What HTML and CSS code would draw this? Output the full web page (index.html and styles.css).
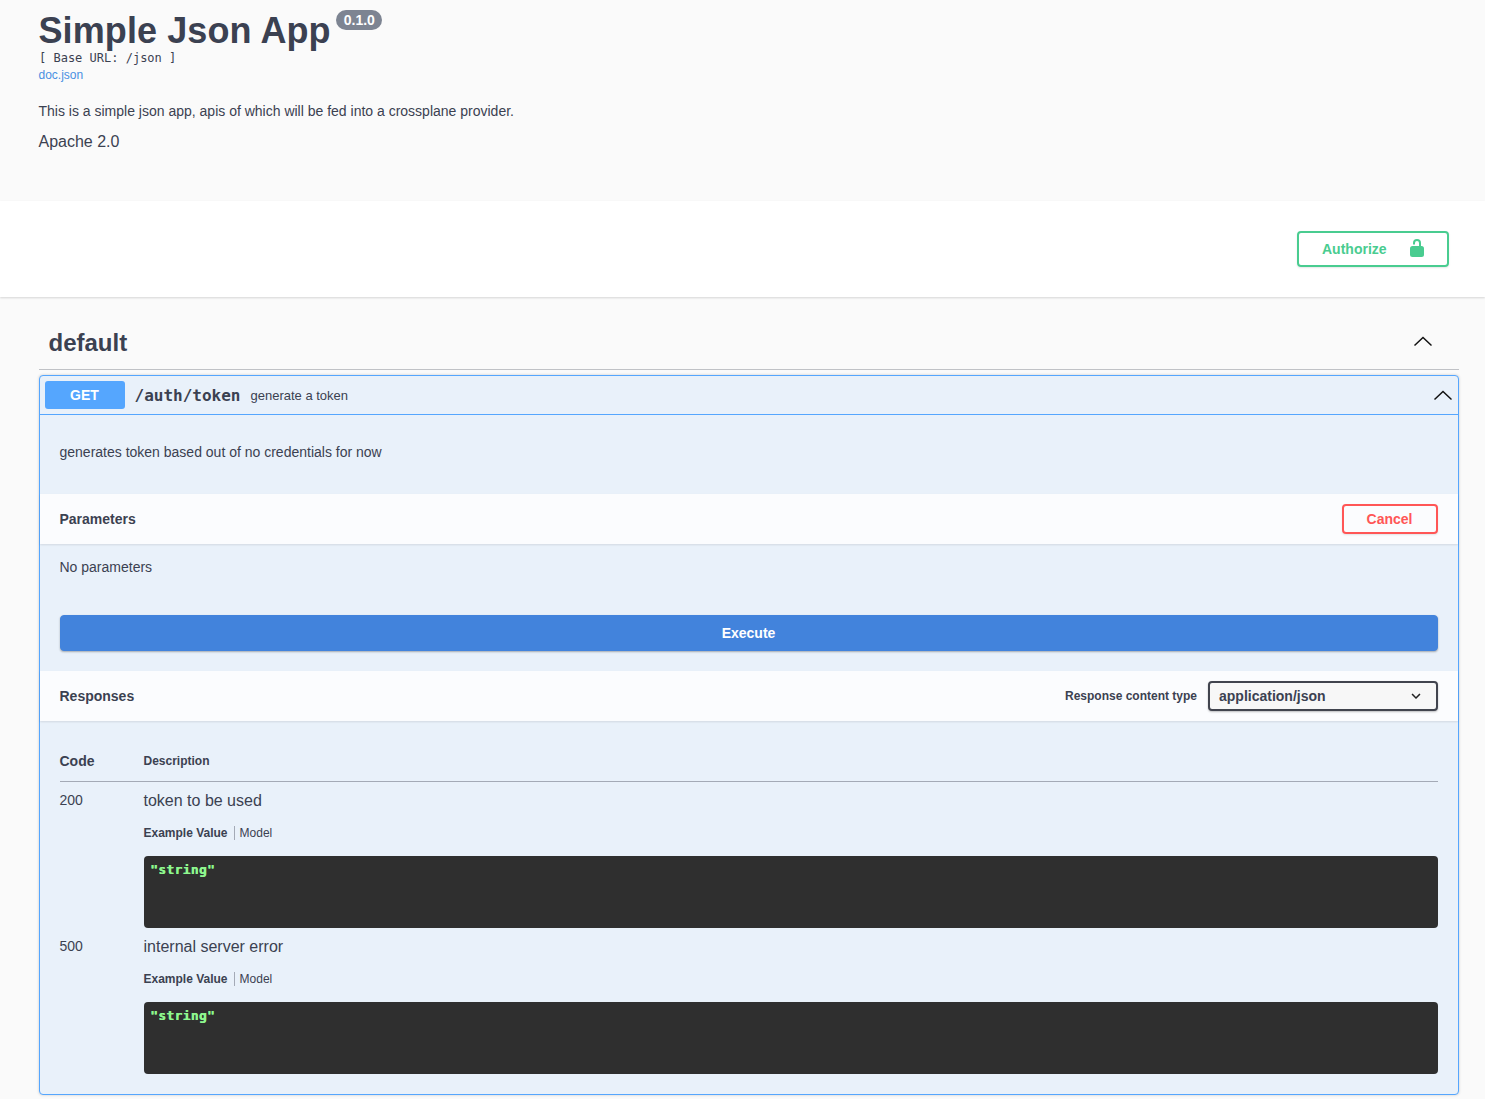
FILE: index.html
```html
<!DOCTYPE html>
<html lang="en">
<head>
    <meta charset="UTF-8">
    <title>Simple Json App</title>
    <link rel="stylesheet" href="styles.css">
</head>
<body>
<div class="info">
    <div class="title-row">
        <h2 class="title">Simple Json App</h2>
        <span class="version">0.1.0</span>
    </div>
    <div class="base-url">[ Base URL: /json ]</div>
    <a class="doc-link" href="#">doc.json</a>
    <p class="info-desc">This is a simple json app, apis of which will be fed into a crossplane provider.</p>
    <div class="license">Apache 2.0</div>
</div>

<div class="scheme">
    <button class="btn-auth">
        <span>Authorize</span>
        <svg width="20" height="20" viewBox="0 0 20 20"><rect x="3" y="7" width="14" height="11" rx="2.5" fill="#49cc90"/><path d="M7 5.500V4a3 3 0 0 1 6 0v4" fill="none" stroke="#49cc90" stroke-width="2"/></svg>
    </button>
</div>

<div class="wrapper">
    <div class="tag-row">
        <h3 class="tag-name">default</h3>
        <svg class="arrow" width="20" height="20" viewBox="0 0 20 20"><path d="M1.500 14.500 10 6.500l8.500 8" fill="none" stroke="#111" stroke-width="1.5"/></svg>
    </div>

    <div class="opblock">
        <div class="summary">
            <span class="method">GET</span>
            <span class="path">/auth/token</span>
            <span class="summary-desc">generate a token</span>
            <svg class="arrow arrow-op" width="20" height="20" viewBox="0 0 20 20"><path d="M1.500 14.500 10 6.500l8.500 8" fill="none" stroke="#111" stroke-width="1.5"/></svg>
        </div>

        <div class="op-desc">generates token based out of no credentials for now</div>

        <div class="section-head">
            <h4 class="section-title">Parameters</h4>
            <button class="btn-cancel">Cancel</button>
        </div>
        <div class="no-params">No parameters</div>
        <div class="execute-wrap">
            <button class="btn-execute">Execute</button>
        </div>

        <div class="section-head">
            <h4 class="section-title">Responses</h4>
            <div class="content-type">
                <span class="content-label">Response content type</span>
                <div class="select">
                    <span>application/json</span>
                    <svg width="20" height="20" viewBox="0 0 20 20"><path d="M13.400 7.500 10 10.900 6.600 7.500 5.500 8.600 10 13l4.500-4.400z" fill="#222"/></svg>
                </div>
            </div>
        </div>

        <div class="responses">
            <div class="resp-head">
                <div class="col-code">Code</div>
                <div class="col-desc">Description</div>
            </div>

            <div class="resp-row">
                <div class="col-code code-val">200</div>
                <div class="col-main">
                    <div class="resp-text">token to be used</div>
                    <div class="tabs"><span class="tab tab-on">Example Value</span><span class="tab">Model</span></div>
                    <pre class="example">"string"</pre>
                </div>
            </div>

            <div class="resp-row">
                <div class="col-code code-val">500</div>
                <div class="col-main">
                    <div class="resp-text">internal server error</div>
                    <div class="tabs"><span class="tab tab-on">Example Value</span><span class="tab">Model</span></div>
                    <pre class="example">"string"</pre>
                </div>
            </div>
        </div>
    </div>
</div>
</body>
</html>
```

FILE: styles.css
```css
html,body{ margin:0; padding:0; }
body{ background:#fafafa; color:#3b4151; font-family:"Liberation Sans",Arial,sans-serif; height:1099px; overflow:hidden; }
h2,h3,h4,p,pre{ margin:0; }
button{ font-family:inherit; background:none; cursor:pointer; }

/* top info block */
.info{ height:201px; padding:0 38.5px; box-sizing:border-box; }
.title-row{ display:flex; align-items:flex-start; height:51px; padding-top:11px; box-sizing:border-box; }
.title{ font-size:36px; line-height:40px; font-weight:bold; letter-spacing:.1px; color:#3b4151; }
.version{ margin:-1px 0 0 5.5px; background:#7d8492; color:#fff; font-size:14px; font-weight:bold; line-height:16px; padding:2px 7.5px; border-radius:57px; }
.base-url{ font-family:"DejaVu Sans Mono","Liberation Mono",monospace; font-size:12px; line-height:15px; padding-left:.5px; color:#3b4151; }
.doc-link{ display:block; font-size:12px; line-height:19px; color:#4990e2; text-decoration:none; }
.info-desc{ font-size:14px; line-height:20px; margin-top:16px; }
.license{ font-size:16px; line-height:22px; margin-top:10px; }

/* authorize bar */
.scheme{ height:96px; background:#fff; box-shadow:0 1px 2px rgba(0,0,0,.15); display:flex; align-items:center; justify-content:flex-end; padding-right:36px; box-sizing:border-box; position:relative; }
.btn-auth{ width:152px; height:36px; border:2px solid #49cc90; border-radius:4px; color:#49cc90; font-size:14px; font-weight:bold; display:flex; align-items:center; padding:0 20px 0 23px; justify-content:space-between; box-shadow:0 1px 2px rgba(0,0,0,.1); }

.wrapper{ padding:0 26px 0 39px; }
.tag-row{ height:73px; border-bottom:1px solid rgba(59,65,81,.3); display:flex; align-items:center; justify-content:space-between; padding:16px 26px 0 9.5px; box-sizing:border-box; }
.tag-name{ font-size:24px; line-height:30px; font-weight:bold; margin-top:4px; }
.arrow{ display:block; }

/* operation */
.opblock{ margin-top:5px; border:1px solid #55a6fe; border-radius:4px; background:#e9f1fa; box-shadow:0 0 3px rgba(0,0,0,.19); }
.summary{ height:38px; display:flex; align-items:center; padding:0 5px; border-bottom:1px solid #55a6fe; }
.method{ width:80px; height:28px; background:#55a6fe; border-radius:3px; color:#fff; font-size:14px; font-weight:bold; line-height:28px; text-align:center; text-indent:-1px; }
.path{ margin-left:9.5px; font-family:"DejaVu Sans Mono","Liberation Mono",monospace; font-size:16px; font-weight:bold; color:#3b4151; }
.summary-desc{ margin-left:10px; font-size:13px; }
.arrow-op{ margin-left:auto; }
.op-desc{ height:79px; padding:28px 19.5px 0; box-sizing:border-box; font-size:14px; line-height:18px; }

.section-head{ height:50px; background:rgba(255,255,255,.8); box-shadow:0 1px 2px rgba(0,0,0,.1); display:flex; align-items:center; justify-content:space-between; padding:0 20px 0 19.5px; }
.section-title{ font-size:14px; font-weight:bold; }
.btn-cancel{ width:96px; height:30px; border:2px solid #ff5656; border-radius:4px; color:#ff5656; font-size:14px; font-weight:bold; padding:0 1px 0 0; box-shadow:0 1px 2px rgba(0,0,0,.1); }
.no-params{ height:71px; padding:14px 19.5px 0; box-sizing:border-box; font-size:14px; line-height:18px; }
.execute-wrap{ height:56px; padding:0 20px; }
.btn-execute{ display:block; width:100%; height:36px; border:1px solid #4283dc; border-radius:4px; background:#4283dc; color:#fff; font-size:14px; font-weight:bold; box-shadow:0 1px 2px rgba(0,0,0,.3); padding:0 1px 0 0; }

.content-type{ display:flex; align-items:center; }
.content-label{ font-size:12px; font-weight:bold; margin-right:11px; }
.select{ width:230px; height:30px; box-sizing:border-box; border:2px solid #41444e; border-radius:4px; background:#f7f7f7; display:flex; align-items:center; justify-content:space-between; padding:0 10px 0 9px; font-size:14px; font-weight:bold; box-shadow:0 1px 2px rgba(0,0,0,.25); }

.responses{ padding:20px 20px 20px 19.5px; }
.resp-head{ display:flex; height:39px; padding-bottom:1px; align-items:center; border-bottom:1px solid rgba(59,65,81,.4); }
.col-code{ width:84px; flex:none; font-size:14px; font-weight:bold; }
.col-desc{ font-size:12px; font-weight:bold; }
.code-val{ font-weight:normal; line-height:18px; padding-top:9px; }
.resp-row{ display:flex; height:146px; }
.col-main{ flex:1; }
.resp-text{ font-size:16px; line-height:20px; margin-top:9px; }
.tabs{ display:flex; align-items:center; margin-top:15px; height:14px; }
.tab{ font-size:12px; line-height:14px; padding-right:6px; margin-right:5px; }
.tab-on{ font-weight:bold; border-right:1px solid rgba(59,65,81,.4); }
.example{ margin-top:16px; height:72px; box-sizing:border-box; background:#2f2f2f; border-radius:4px; padding:6px 6.5px 0; font-family:"DejaVu Sans Mono","Liberation Mono",monospace; font-size:13px; line-height:16px; font-weight:bold; letter-spacing:.3px; color:#8ef78e; text-shadow:.4px 0 #8ef78e; }
```
